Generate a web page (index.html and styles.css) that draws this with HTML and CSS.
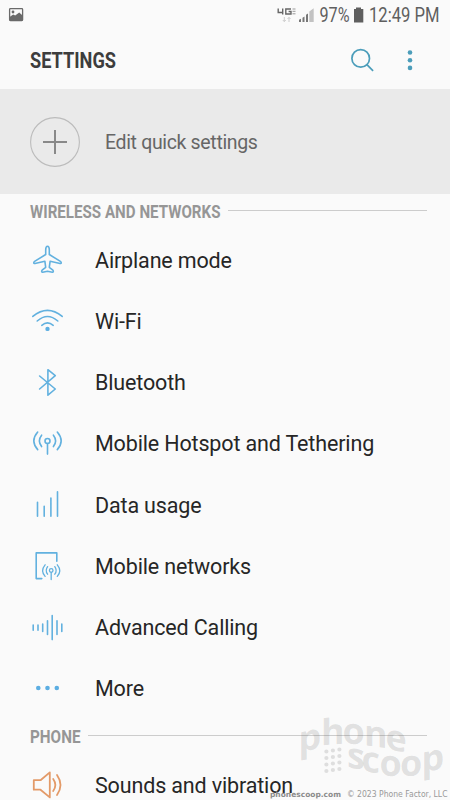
FILE: index.html
```html
<!DOCTYPE html>
<html lang="en">
<head>
<meta charset="utf-8">
<title>Settings</title>
<link rel="stylesheet" href="styles.css">
</head>
<body>
<main class="screen">
  <div class="status">
    <svg class="photo" width="16" height="15" viewBox="0 0 16 15"><rect x="1.6" y="1.6" width="13" height="12" rx=".8" fill="none" stroke="#6a6a6a" stroke-width="1.3"/><path d="M1.6 10l3.6-2.6 2 1 4-3 3.4 3v5.4h-13z" fill="#6a6a6a"/><circle cx="5" cy="5" r="1.4" fill="#6a6a6a"/></svg>
    <svg class="status-info" width="180" height="32" viewBox="270 0 180 32">
      <path d="M278.2 8.5v4h4.5M282.7 8.5v6M291 9h-5.2v5H291v-2.5h-2.4" fill="none" stroke="#666" stroke-width="1.4"/>
      <path d="M292.5 9h3M292.5 11.3h3M292.5 13.8h3" stroke="#999" stroke-width="1"/>
      <path d="M284.3 17v4.5M282.8 20l1.5 1.6 1.5-1.6M289 22v-4.5M287.5 19l1.5-1.6 1.5 1.6" fill="none" stroke="#ccc" stroke-width="1"/>
      <path d="M299 22v-2.2l2-1V22zM302.5 22v-4.2l2-1.4V22zM306 22v-7.2l2-1.4V22z" fill="#777"/>
      <path d="M309.3 22V11.5l4.4-3.3V22z" fill="#c2c2c2"/>
      <text class="status-text" x="319.5" y="22.4" textLength="30" lengthAdjust="spacingAndGlyphs">97%</text>
      <path d="M354 9h2V7.5h5V9h2.3v13.5H354z" fill="#5f5f5f"/>
      <text class="status-text" x="369" y="22.4" textLength="70.5" lengthAdjust="spacingAndGlyphs">12:49 PM</text>
    </svg>
  </div>
  <header class="appbar">
    <svg width="90" height="30" viewBox="0 0 90 30"><text class="title" x="0" y="23.4" textLength="86" lengthAdjust="spacingAndGlyphs">SETTINGS</text></svg>
    <div class="actions">
      <svg width="26" height="26" viewBox="0 0 26 26" fill="none" stroke="#4b9dba" stroke-width="1.7"><circle cx="10.7" cy="11.4" r="8.8"/><path d="M16.9 17.6l6.2 6.2"/></svg>
      <svg width="6" height="24" viewBox="0 0 6 24" fill="#4b9dba"><circle cx="3" cy="4.5" r="2.3"/><circle cx="3" cy="12.2" r="2.3"/><circle cx="3" cy="19.9" r="2.3"/></svg>
    </div>
  </header>
  <section class="quick">
    <svg width="50" height="50" viewBox="0 0 50 50" fill="none"><circle cx="25" cy="25" r="24.4" stroke="#bcbcbc" stroke-width="1.1"/><path d="M13 25h24M25 13v24" stroke="#898989" stroke-width="2"/></svg>
    <span>Edit quick settings</span>
  </section>
  <div class="group-head wireless">
    <svg width="191" height="22" viewBox="0 0 191 22"><text class="head-text" x="0" y="18" textLength="190.5" lengthAdjust="spacingAndGlyphs">WIRELESS AND NETWORKS</text></svg><i class="rule"></i>
  </div>
  <nav class="list">
    <div class="row"><svg class="icon" viewBox="0 0 34 34"><path d="M16.5 3.2C14.8 3.2 14.7 5 14.7 7v4.5L3.6 18.4c-1.2.8-1.1 2.3.3 2.1l10-2.2.8 6-3.6 2.9c-.7.7-.5 2.2.6 2l4.8-.9 4.8.9c1.1.2 1.3-1.3.6-2l-3.6-2.9.8-6 10 2.2c1.4.2 1.5-1.3.3-2.1L18.3 11.5V7c0-2-.1-3.8-1.8-3.8z"/></svg><span>Airplane mode</span></div>
    <div class="row"><svg class="icon" viewBox="0 0 34 34"><path d="M1.8 12.4q14.7-12 29.4 0M6.2 17q10.3-9 20.6 0M10.8 21.3q5.7-4.7 11.4 0"/><circle class="solid" cx="16.5" cy="24.9" r="2.2"/></svg><span>Wi-Fi</span></div>
    <div class="row"><svg class="icon" viewBox="0 0 34 34"><path d="M8.6 10l15.7 13-7.4 6.2V3.7l7.4 6L8.6 23"/></svg><span>Bluetooth</span></div>
    <div class="row"><svg class="icon" viewBox="0 0 34 34"><circle cx="16.5" cy="14" r="2.5"/><path d="M16.5 16.6v10.5M10.6 8.2q-4.4 5.5 0 11.4M6.7 5q-7.7 8.9 0 17.6M22.4 8.2q4.4 5.5 0 11.4M26.3 5q7.7 8.9 0 17.6"/></svg><span>Mobile Hotspot and Tethering</span></div>
    <div class="row"><svg class="icon" viewBox="0 0 34 34"><path d="M6.5 14.2v14M13.2 18.2v10M19.9 10v18.2M26.5 3.8v24.4"/></svg><span>Data usage</span></div>
    <div class="row"><svg class="icon" viewBox="0 0 34 34"><path d="M10.8 29.6H5.2V3.9h20.6v8.4"/><g class="fine"><circle cx="20.2" cy="21.5" r="1.8"/><path d="M20.2 23.4v7.2M16.6 17.6q-2.8 3.9 0 7.6M14.1 15.8q-4.9 5.9 0 11.6M23.8 17.6q2.8 3.9 0 7.6M26.3 15.8q4.9 5.9 0 11.6"/></g></svg><span>Mobile networks</span></div>
    <div class="row"><svg class="icon" viewBox="0 0 34 34"><path d="M2.2 14v5.3M7 14v5.3M11.7 13v7.5M16.5 9.8v13.7M21.2 4.6v24M26 9.8v13.7M30.8 13v7.5"/></svg><span>Advanced Calling</span></div>
    <div class="row"><svg class="icon" viewBox="0 0 34 34"><g class="solid"><circle cx="7.3" cy="16" r="2.3"/><circle cx="16.5" cy="16" r="2.3"/><circle cx="25.8" cy="16" r="2.3"/></g></svg><span>More</span></div>
  </nav>
  <div class="group-head phone">
    <svg width="51" height="22" viewBox="0 0 51 22"><text class="head-text" x="0" y="17.7" textLength="50.5" lengthAdjust="spacingAndGlyphs">PHONE</text></svg><i class="rule"></i>
  </div>
  <div class="row sound"><svg class="icon" viewBox="0 0 34 34"><path d="M2.8 11.2h6.7l9.3-7.8v25l-9.3-7.7H2.8zM22.2 10q4.3 6 0 12M26 6q7 10 0 20"/></svg><span>Sounds and vibration</span></div>
  <svg class="watermark" width="190" height="100" viewBox="260 700 190 100">
    <g class="brand">
      <text transform="translate(298.5 752.5) skewY(-12)">p</text>
      <text transform="translate(321 745.5) skewY(-5)">h</text>
      <text transform="translate(342.5 743.5) skewY(2)">o</text>
      <text transform="translate(364 745) skewY(8)">n</text>
      <text transform="translate(385.5 748.5) skewY(12)">e</text>
      <text transform="translate(347 767) skewY(10)">s</text>
      <text transform="translate(361.5 771) skewY(8)">c</text>
      <text transform="translate(379.5 775.5) skewY(2)">o</text>
      <text transform="translate(400 776.5) skewY(-4)">o</text>
      <text transform="translate(421.5 772.5) skewY(-10)">p</text>
    </g>
    <path class="keypad" d="M326.4 751.5h0M332.9 750.5h0M339.4 749.5h0M326.4 758h0M332.9 757h0M339.4 756h0M326.4 764.5h0M332.9 763.5h0M339.4 762.5h0M326.4 771h0M332.9 770h0M339.4 769h0"/>
    <text class="site" x="270" y="797" textLength="71" lengthAdjust="spacingAndGlyphs">phonescoop.com</text>
    <text class="copy" x="347" y="797" textLength="100.5" lengthAdjust="spacingAndGlyphs">© 2023 Phone Factor, LLC</text>
  </svg>
</main>
</body>
</html>
```
FILE: styles.css
```css
* { box-sizing: border-box; }
body { margin: 0; background: #fafafa; font-family: Roboto, "Liberation Sans", sans-serif; }
svg { display: block; flex: none; overflow: visible; }
.screen { position: relative; width: 450px; height: 800px; overflow: hidden; display: flex; flex-direction: column; }
.status { height: 32px; display: flex; justify-content: space-between; padding-left: 8px; flex: none; }
.photo { margin-top: 7px; }
.status-text { font-size: 20px; fill: #5f5f5f; }
.appbar { height: 58px; flex: none; display: flex; align-items: center; justify-content: space-between; padding: 0 37px 1px 30px; border-bottom: 1px solid #eaeaea; }
.title { font-size: 22px; font-weight: 700; fill: #3d3d3d; }
.actions { display: flex; align-items: center; gap: 31px; }
.quick { height: 104px; flex: none; background: #eaeaea; display: flex; align-items: center; gap: 25px; padding: 0 30px; color: #666; font-size: 19.5px; letter-spacing: -.34px; }
.group-head { flex: none; display: flex; align-items: center; gap: 7px; padding: 0 23px 0 30px; }
.wireless { height: 33px; margin-bottom: 3px; }
.phone { height: 34px; margin-top: -1px; }
.head-text { font-size: 17.5px; font-weight: 700; fill: #969696; }
.rule { height: 1px; background: #ccc; flex: 1; margin-bottom: 1px; }
.list { flex: none; display: flex; flex-direction: column; }
.row { height: 61.25px; flex: none; display: flex; align-items: center; gap: 30px; padding-left: 31px; padding-bottom: 1px; color: #262626; font-size: 21.5px; letter-spacing: -.15px; white-space: nowrap; }
.icon { width: 34px; height: 34px; fill: none; stroke: #62b1df; stroke-width: 1.6; stroke-linecap: round; stroke-linejoin: round; }
.icon .fine { stroke-width: 1.3; }
.icon .solid { fill: #5caee2; stroke: none; }
.sound { height: 66px; }
.sound .icon { stroke: #e39a68; stroke-width: 1.8; }
.watermark { position: absolute; right: 0; bottom: 0; }
.brand { font: 700 36px "Open Sans", "Noto Sans", sans-serif; fill: rgba(90,90,90,.17); }
.keypad { stroke: #dedede; stroke-width: 4.2; stroke-linecap: round; }
.site { font: 700 7.5px "DejaVu Sans", sans-serif; fill: #8c8c8c; }
.copy { font: 8px "DejaVu Sans", sans-serif; fill: #999; }
```
